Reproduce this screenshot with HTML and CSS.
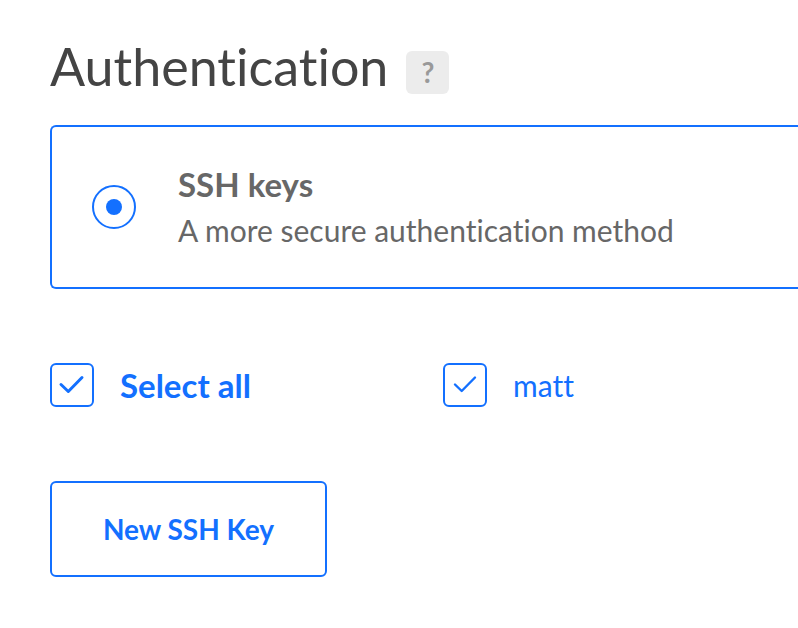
FILE: index.html
```html
<!DOCTYPE html>
<html lang="en">
<head>
<meta charset="utf-8">
<meta name="viewport" content="width=device-width, initial-scale=1">
<title>Authentication</title>
<link rel="stylesheet" href="styles.css">
</head>
<body>
<main class="auth">
  <header class="heading">
    <h1 class="title">Authentication</h1>
    <button class="help" type="button">?</button>
  </header>
  <label class="method">
    <input class="radio" type="radio" name="method" checked>
    <span class="method-text">
      <strong class="method-name">SSH keys</strong>
      <span class="method-note">A more secure authentication method</span>
    </span>
  </label>
  <div class="keys">
    <label class="key key-all">
      <span class="tick">
        <input class="box" type="checkbox" checked>
        <svg class="mark" viewBox="0 0 44 44" aria-hidden="true"><path d="M11 21.5L18.3 28.5L32 14.5" stroke-width="3"/></svg>
      </span>
      <span>Select all</span>
    </label>
    <label class="key">
      <span class="tick">
        <input class="box" type="checkbox" checked>
        <svg class="mark" viewBox="0 0 44 44" aria-hidden="true"><path d="M12 21.5L18.7 28L32 14.5" stroke-width="2.4"/></svg>
      </span>
      <span>matt</span>
    </label>
  </div>
  <button class="new-key" type="button">New SSH Key</button>
</main>
</body>
</html>
```
FILE: styles.css
```css
* {
  box-sizing: border-box;
}

body {
  margin: 0;
  background: #fff;
  color: #676767;
  font-family: Lato, "Liberation Sans", sans-serif;
  font-variant-ligatures: none;
}

.auth {
  padding: 40px 0 48px 50px;
}

.heading {
  display: flex;
  align-items: flex-start;
  gap: 18px;
  height: 64px;
  margin-bottom: 21px;
}

.title {
  margin: 0;
  color: #444;
  font-size: 52px;
  font-weight: 400;
  line-height: 52px;
}

.help {
  align-self: center;
  width: 43px;
  height: 43px;
  padding: 0;
  border: 0;
  border-radius: 6px;
  background: #ececec;
  color: #999;
  font: 700 28px/43px Lato, sans-serif;
}

.method {
  display: flex;
  align-items: center;
  gap: 42px;
  padding: 34px 40px;
  border: 2px solid #1370ff;
  border-right: 0;
  border-radius: 6px 0 0 6px;
}

.radio,
.box {
  appearance: none;
  flex: none;
  width: 44px;
  height: 44px;
  margin: 0;
  border: 2px solid #1370ff;
}

.radio {
  display: grid;
  place-items: center;
  border-radius: 50%;
}

.radio:checked::before {
  content: "";
  width: 16px;
  height: 16px;
  border-radius: 50%;
  background: #1370ff;
}

.method-text {
  display: grid;
  font-size: 30px;
  line-height: 46px;
}

.method-name {
  font-size: 33px;
}

.keys {
  display: grid;
  grid-template-columns: 393px 1fr;
  margin: 74px 0;
}

.key {
  display: flex;
  align-items: center;
  gap: 26px;
  color: #1370ff;
  font-size: 30px;
  line-height: 42px;
}

.key-all {
  font-size: 33px;
  font-weight: 700;
}

.tick {
  display: grid;
}

.box,
.mark {
  grid-area: 1 / 1;
}

.box {
  border-radius: 6px;
}

.mark {
  width: 44px;
  height: 44px;
  fill: none;
  stroke: #1370ff;
  stroke-linecap: round;
  stroke-linejoin: round;
  pointer-events: none;
  visibility: hidden;
}

.box:checked + .mark {
  visibility: visible;
}

.new-key {
  min-width: 277px;
  height: 96px;
  padding: 0 48px;
  border: 2px solid #1370ff;
  border-radius: 6px;
  background: #fff;
  color: #1370ff;
  font: 700 28px/40px Lato, sans-serif;
}
```
